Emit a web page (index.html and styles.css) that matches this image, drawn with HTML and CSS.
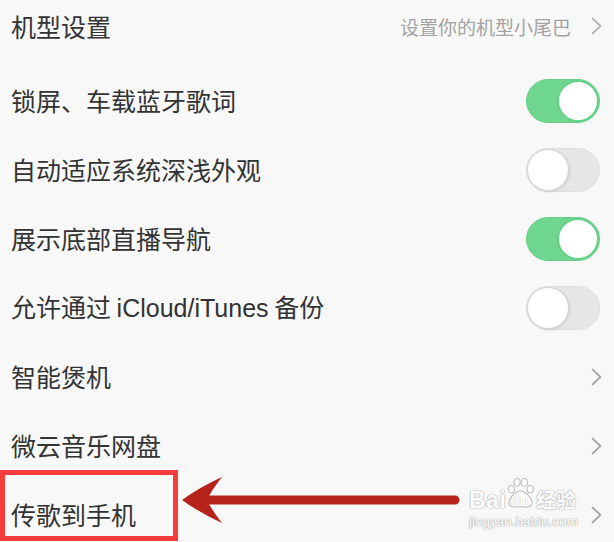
FILE: index.html
```html
<!DOCTYPE html>
<html lang="zh-CN">
<head>
    <meta charset="UTF-8">
    <meta name="viewport" content="width=device-width, initial-scale=1.0">
    <title>设置</title>
    <link rel="stylesheet" href="styles.css">
</head>
<body>
    <div class="settings">
        <div class="row row-first">
            <span class="label">机型设置</span>
            <span class="value">设置你的机型小尾巴</span>
            <svg class="chevron" viewBox="0 0 11 18"><polyline points="1.5,1.5 9.5,9 1.5,16.5"/></svg>
        </div>

        <div class="spacer"></div>

        <div class="row">
            <span class="label">锁屏、车载蓝牙歌词</span>
            <span class="switch on"><span class="knob"></span></span>
        </div>
        <div class="row">
            <span class="label">自动适应系统深浅外观</span>
            <span class="switch"><span class="knob"></span></span>
        </div>
        <div class="row">
            <span class="label">展示底部直播导航</span>
            <span class="switch on"><span class="knob"></span></span>
        </div>
        <div class="row">
            <span class="label">允许通过 <span class="latin">iCloud/iTunes</span> 备份</span>
            <span class="switch"><span class="knob"></span></span>
        </div>
        <div class="row">
            <span class="label">智能煲机</span>
            <svg class="chevron" viewBox="0 0 11 18"><polyline points="1.5,1.5 9.5,9 1.5,16.5"/></svg>
        </div>
        <div class="row">
            <span class="label">微云音乐网盘</span>
            <svg class="chevron" viewBox="0 0 11 18"><polyline points="1.5,1.5 9.5,9 1.5,16.5"/></svg>
        </div>
        <div class="row">
            <span class="label">传歌到手机</span>
            <svg class="chevron" viewBox="0 0 11 18"><polyline points="1.5,1.5 9.5,9 1.5,16.5"/></svg>
        </div>
    </div>

    <!-- annotation overlays -->
    <div class="highlight-box"></div>

    <svg class="arrow" viewBox="0 0 280 56">
        <line x1="30" y1="28" x2="275" y2="28" stroke="#b5231b" stroke-width="9" stroke-linecap="round"/>
        <path d="M2 28 Q20 15 42 5 Q31 19 27 28 Q31 37 42 51 Q20 41 2 28 Z" fill="#b5231b"/>
    </svg>

    <div class="watermark">
        <div class="wm-top">
            <span class="wm-bai">Bai</span>
            <span class="wm-paw">
                <svg viewBox="0 0 30 32">
                    <ellipse cx="5.5" cy="12" rx="3.2" ry="3.8"/>
                    <ellipse cx="11.5" cy="5" rx="3.2" ry="4"/>
                    <ellipse cx="19" cy="5" rx="3.2" ry="4"/>
                    <ellipse cx="25" cy="12" rx="3.2" ry="3.8"/>
                    <path d="M15 14 C10 14 3 21 3 26 C3 31 9 31 15 30 C21 31 27 31 27 26 C27 21 20 14 15 14 Z"/>
                </svg>
                <span class="wm-du">du</span>
            </span>
            <span class="wm-jy">经验</span>
        </div>
        <div class="wm-url">jingyan.baidu.com</div>
    </div>
</body>
</html>
```

FILE: styles.css
```css
body {
    margin: 0;
    background-color: #f8f8f8;
    font-family: "Noto Sans CJK SC", "Noto Sans", sans-serif;
    color: #333333;
    width: 614px;
    height: 542px;
    overflow: hidden;
    position: relative;
}

.settings {
    display: flex;
    flex-direction: column;
}

.row {
    height: 69px;
    display: flex;
    align-items: center;
    padding: 0 12px 0 11px;
}

.row-first {
    height: 52px;
}

.spacer {
    height: 14px;
}

.label {
    font-size: 25px;
    line-height: 1;
    flex: 1;
    white-space: nowrap;
}

.latin {
    font-family: "Liberation Sans", sans-serif;
    font-size: 25px;
}

.value {
    font-size: 19px;
    color: #a3a3a3;
    margin-right: 20px;
}

.chevron {
    width: 11px;
    height: 18px;
    fill: none;
    stroke: #a6a6a6;
    stroke-width: 1.8;
    stroke-linecap: round;
    stroke-linejoin: round;
}

.row-first .chevron {
    stroke: #b5b5b5;
}

.switch {
    width: 74px;
    height: 44px;
    border-radius: 22px;
    background-color: #e6e6e6;
    box-sizing: border-box;
    border: 1px solid #dedede;
    margin-right: 2px;
    display: flex;
    align-items: center;
    justify-content: flex-start;
}

.switch .knob {
    width: 42px;
    height: 42px;
    border-radius: 50%;
    background-color: #ffffff;
    box-sizing: border-box;
    border: 1px solid #d4d4d4;
    box-shadow: 1px 1px 3px rgba(0, 0, 0, 0.1);
}

.switch.on {
    background-color: #6ed68f;
    border-color: #66d088;
    justify-content: flex-end;
}

.switch.on .knob {
    border: 2px solid #66d088;
    box-shadow: none;
}

.highlight-box {
    position: absolute;
    left: 0;
    top: 470px;
    width: 178px;
    height: 71px;
    border: 5px solid #f53b3b;
    box-sizing: border-box;
}

.arrow {
    position: absolute;
    left: 180px;
    top: 472px;
    width: 280px;
    height: 56px;
}

.watermark {
    position: absolute;
    left: 469px;
    top: 475px;
    color: #ffffff;
    text-shadow: 0 0 1px #aaaaaa, 0 0 1px #aaaaaa, 0 0 2px #cccccc;
}

.wm-top {
    display: flex;
    align-items: flex-end;
    height: 34px;
}

.wm-bai {
    font-family: "Liberation Sans", sans-serif;
    font-weight: bold;
    font-size: 23px;
    line-height: 18px;
    letter-spacing: 0.5px;
}

.wm-paw {
    position: relative;
    width: 29px;
    height: 32px;
    margin: 0 1px 0 0;
}

.wm-paw svg {
    width: 29px;
    height: 32px;
    fill: #ffffff;
    stroke: #bdbdbd;
    stroke-width: 1.1;
}

.wm-du {
    position: absolute;
    left: 4px;
    bottom: 2px;
    font-family: "Liberation Sans", sans-serif;
    font-weight: bold;
    font-size: 15px;
    line-height: 1;
    color: #ffffff;
    text-shadow: 0 0 1px #999999;
}

.wm-jy {
    font-size: 20px;
    line-height: 18px;
    font-weight: bold;
}

.wm-url {
    font-family: "Liberation Sans", sans-serif;
    font-size: 13.5px;
    line-height: 1;
    margin-top: 6px;
}
```
